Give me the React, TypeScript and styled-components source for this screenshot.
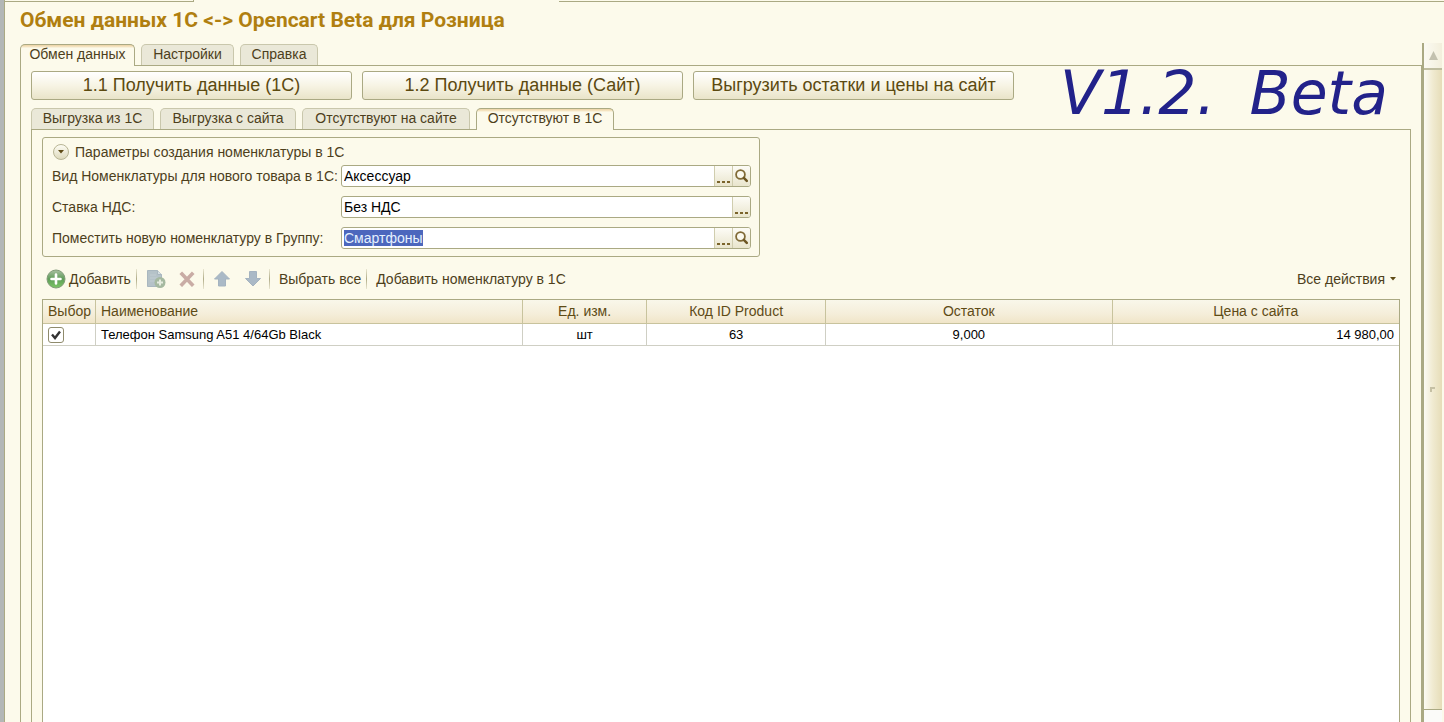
import React, { useEffect, useRef, useState } from "react";
import styled, { createGlobalStyle, css } from "styled-components";

const line = "#aaa983";
const cream = "#fcfaeb";
const brown = "#4d3f1c";

const GlobalStyle = createGlobalStyle`
  *, *::before, *::after { box-sizing: border-box; }
  body {
    margin: 0;
    background: ${cream};
    color: ${brown};
    font-family: "Liberation Sans", Arial, sans-serif;
    font-size: 14px;
    line-height: 16px;
  }
  button, input { font: inherit; color: inherit; }
`;

const Page = styled.div`
  display: flex;
  flex-direction: column;
  height: 100vh;
  overflow: hidden;
  border-left: 4px solid #b3b7b6;
  box-shadow: inset 1px 0 0 ${line};
`;

const TopStrip = styled.div`
  display: flex;
  justify-content: space-between;
  flex: none;
  height: 2px;
`;

const StripEdge = styled.div<{ $width: string; $end?: boolean }>`
  width: ${(p) => p.$width};
  border-bottom: 1px solid ${line};
  ${(p) => p.$end && "border-right: 1px solid #aaa983;"}
`;

const Title = styled.h1`
  margin: 0;
  padding: 6px 16px 0;
  height: 42px;
  flex: none;
  color: #b07f10;
  font-size: 21px;
  line-height: 24px;
  font-family: Roboto, "Liberation Sans", sans-serif;
  font-weight: 700;
`;

const Body = styled.div`
  display: flex;
  flex: 1;
  min-height: 0;
  padding-left: 16px;
`;

const TabbedArea = styled.div`
  display: flex;
  flex-direction: column;
  flex: 1;
  min-width: 0;
  min-height: 0;
`;

const TabList = styled.div`
  display: flex;
  flex: none;
  gap: 6px;
`;

const Tab = styled.button<{ $width: number; $active?: boolean }>`
  width: ${(p) => p.$width}px;
  height: 21px;
  padding: 0 0 2px;
  border: 1px solid #c9c7ac;
  border-bottom: 0;
  border-radius: 5px 5px 0 0;
  background: #eae8d8;
  line-height: 18px;
  white-space: nowrap;
  ${(p) =>
    p.$active &&
    css`
      position: relative;
      height: 22px;
      margin-bottom: -1px;
      padding-bottom: 3px;
      border-color: ${line};
      background: linear-gradient(#ecd3a4, #f6e8c8 2px, ${cream} 3px);
    `}
`;

const TabPanel = styled.div<{ $outer?: boolean }>`
  display: flex;
  flex-direction: column;
  flex: 1;
  min-height: 0;
  padding: ${(p) => (p.$outer ? "5px 10px 0" : "7px 10px 0")};
  border: 1px solid ${line};
  border-bottom: 0;
`;

const CommandRow = styled.div`
  display: flex;
  flex: none;
  gap: 10px;
  height: 37px;
`;

const CommandButton = styled.button`
  flex: none;
  width: 321px;
  height: 29px;
  padding: 0 0 1px;
  border: 1px solid ${line};
  border-radius: 3px;
  background: linear-gradient(#ffffff, #f7f4e4 50%, #e9e4c9);
  color: #5c4a10;
  font-size: 18px;
  white-space: nowrap;
`;

const Version = styled.div`
  display: flex;
  gap: 34px;
  margin-left: 36px;
  height: 44px;
  color: #22228a;
  font-family: "Segoe Print", "DejaVu Sans", cursive;
  font-size: 60px;
  font-style: italic;
  line-height: 44px;
  white-space: nowrap;
`;

const Params = styled.section`
  flex: none;
  width: 718px;
  height: 120px;
  padding: 6px 8px;
  border: 1px solid ${line};
  border-radius: 3px;
`;

const ParamsHeading = styled.div`
  display: flex;
  align-items: center;
  gap: 6px;
  height: 16px;
  margin-bottom: 5px;
  padding-left: 2px;
`;

const RoundButton = styled.button`
  display: grid;
  place-items: center;
  width: 16px;
  height: 16px;
  padding: 0;
  border: 1px solid #b8b594;
  border-radius: 50%;
  background: linear-gradient(#fdfcf3, #dedabd);
`;

const FieldRow = styled.div`
  display: flex;
  align-items: center;
  height: 22px;
  margin-bottom: 9px;
  label { flex: none; width: 290px; padding-left: 1px; white-space: nowrap; }
`;

const FieldBox = styled.div`
  display: flex;
  flex: 1;
  height: 22px;
  border: 1px solid ${line};
  border-radius: 3px;
  background: #fff;
  overflow: hidden;
`;

const FieldInput = styled.input`
  flex: 1;
  min-width: 0;
  padding: 0 2px;
  border: 0;
  outline: 0;
  background: transparent;
  color: #000;
  &::selection { background: #4c67bd; color: #e4f0ff; }
`;

const FieldButton = styled.button`
  display: grid;
  place-items: center;
  width: 18px;
  padding: 0;
  border: 0;
  border-left: 1px solid #d0cdae;
  background: linear-gradient(#fdfcf6, #e9e5cd);
`;

const Toolbar = styled.div`
  display: flex;
  align-items: center;
  flex: none;
  height: 26px;
  margin: 9px 0 7px;
  padding: 0 4px;
`;

const ToolButton = styled.button<{ $icon?: boolean; $gap?: number }>`
  display: flex;
  align-items: center;
  justify-content: center;
  gap: ${(p) => p.$gap ?? 3}px;
  height: 24px;
  ${(p) => p.$icon && "width: 31px;"}
  padding: 0;
  border: 0;
  background: transparent;
  white-space: nowrap;
`;

const Divider = styled.span<{ $before?: number; $after?: number }>`
  width: 1px;
  height: 20px;
  margin: 0 ${(p) => p.$after ?? 4}px 0 ${(p) => p.$before ?? 4}px;
  background: linear-gradient(#e9e6d0, #b0ac88, #e9e6d0);
`;

const Spacer = styled.span`
  flex: 1;
`;

const TableFrame = styled.div`
  flex: 1;
  min-height: 0;
  border: 1px solid ${line};
  border-bottom: 0;
  background: #fff;
`;

const DataTable = styled.table`
  width: 100%;
  border-collapse: separate;
  border-spacing: 0;
  table-layout: fixed;
`;

const HeadCell = styled.th<{ $width?: string; $left?: boolean }>`
  width: ${(p) => p.$width ?? "auto"};
  height: 24px;
  padding: 0 5px 1px;
  border-right: 1px solid #c8c39d;
  border-bottom: 1px solid #c8c39d;
  background: linear-gradient(#f9f7ea, #f5eeda 60%, #f0e5c8);
  color: #5e4b16;
  font-weight: 400;
  text-align: ${(p) => (p.$left ? "left" : "center")};
  white-space: nowrap;
  &:last-child { border-right: 0; }
`;

const Cell = styled.td<{ $align?: string }>`
  height: 22px;
  padding: 1px 5px 0;
  border-right: 1px solid #cfcfc4;
  border-bottom: 1px solid #cfcfc4;
  color: #000;
  font-size: 13px;
  text-align: ${(p) => p.$align ?? "center"};
  white-space: nowrap;
  &:last-child { border-right: 0; }
`;

const CheckBox = styled.input`
  appearance: none;
  width: 16px;
  height: 16px;
  margin: 0;
  border: 1px solid #8f8b6c;
  border-radius: 3px;
  background: #fff;
  &:not(:checked) + svg { visibility: hidden; }
`;

const CheckWrap = styled.label`
  display: grid;
  width: 16px;
  height: 16px;
  & > * { grid-area: 1 / 1; }
  svg { pointer-events: none; z-index: 1; }
`;

const ScrollColumn = styled.div`
  display: flex;
  flex-direction: column;
  flex: none;
  width: 22px;
  margin-top: -1px;
  padding-right: 2px;
  border-left: 2px solid ${line};
`;

const ScrollUp = styled.button`
  display: grid;
  place-items: center;
  flex: none;
  height: 27px;
  padding: 0;
  border: 0;
  border-bottom: 2px solid #bfbd9f;
  background: linear-gradient(90deg, #fbfaf2, #f3efdc);
`;

const ScrollThumb = styled.div`
  display: grid;
  place-items: center;
  flex: 1;
  border-bottom: 1px solid ${line};
  background: linear-gradient(90deg, #fcfbf2, #f0ead0 50%, #e6ddb8);
`;

const ScrollEnd = styled.div`
  flex: none;
  height: 12px;
  background: #fbfbf9;
`;

const DotsIcon = () => (
  <svg width="13" height="20" viewBox="0 0 13 20" aria-hidden="true">
    <path d="M0 15h3v2h-3zM5 15h3v2h-3zM10 15h3v2h-3z" fill="#7b642b" />
  </svg>
);

const SearchIcon = () => (
  <svg width="15" height="16" viewBox="0 0 15 16" aria-hidden="true">
    <circle cx="6.5" cy="6.5" r="4.4" fill="#fbf9ee" stroke="#806a36" strokeWidth="1.8" />
    <path d="M9.8 9.8l3 3" stroke="#6e5724" strokeWidth="2.6" strokeLinecap="round" />
  </svg>
);

const AddIcon = () => (
  <svg width="20" height="20" viewBox="0 0 20 20" aria-hidden="true">
    <defs>
      <linearGradient id="addFill" x1="0" y1="0" x2="0" y2="1">
        <stop offset="0" stopColor="#a9bfa3" />
        <stop offset="0.5" stopColor="#5f9d59" />
        <stop offset="1" stopColor="#7cc765" />
      </linearGradient>
    </defs>
    <circle cx="10" cy="10" r="9" fill="url(#addFill)" stroke="#809b78" />
    <path d="M10 5.5v9M5.5 10h9" stroke="#fff" strokeWidth="2.6" strokeLinecap="round" />
  </svg>
);

const CopyIcon = () => (
  <svg width="20" height="20" viewBox="0 0 20 20" aria-hidden="true">
    <path d="M1.5 1.5h10l4 4v12h-14z" fill="#b5c2c8" stroke="#a9b7bf" />
    <path d="M11.5 1.5v4h4" fill="#d8e0e2" stroke="#a9b7bf" />
    <path d="M4 6h6M4 9h8M4 12h5" stroke="#c1ccd1" />
    <circle cx="14" cy="13.5" r="5.5" fill="#a5b9a0" />
    <path d="M14 10.5v6M11 13.5h6" stroke="#e6ece0" strokeWidth="2" />
  </svg>
);

const DeleteIcon = () => (
  <svg width="16" height="16" viewBox="0 0 16 16" aria-hidden="true">
    <path d="M3 3l10 10.5M13 3l-10 10.5" stroke="#c9aca5" strokeWidth="3.6" strokeLinecap="square" />
  </svg>
);

const ArrowIcon = ({ down }: { down?: boolean }) => (
  <svg width="18" height="18" viewBox="0 0 18 18" aria-hidden="true">
    <path
      d={down ? "M5.5 1.5h7v7h4l-7.5 7.5l-7.5-7.5h4z" : "M9 1.5l7.5 7.5h-4v7h-7v-7h-4z"}
      fill="#aab9c6"
      stroke="#a4b3c0"
      strokeLinejoin="round"
    />
  </svg>
);

const Caret = () => (
  <svg width="6" height="4" viewBox="0 0 6 4" aria-hidden="true">
    <path d="M0 0h6l-3 3.5z" fill="#5e4b16" />
  </svg>
);

const mainTabs = [
  { name: "Обмен данных", width: 115 },
  { name: "Настройки", width: 93 },
  { name: "Справка", width: 78 },
];
const innerTabs = [
  { name: "Выгрузка из 1С", width: 123 },
  { name: "Выгрузка с сайта", width: 136 },
  { name: "Отсутствуют на сайте", width: 168 },
  { name: "Отсутствуют в 1С", width: 138 },
];
const commands = ["1.1 Получить данные (1С)", "1.2 Получить данные (Сайт)", "Выгрузить остатки и цены на сайт"];

interface TabsProps {
  items: { name: string; width: number }[];
  current: number;
  onPick: (index: number) => void;
}

function Tabs({ items, current, onPick }: TabsProps) {
  return (
    <TabList role="tablist">
      {items.map((t, i) => (
        <Tab key={t.name} role="tab" aria-selected={i === current} $width={t.width} $active={i === current} onClick={() => onPick(i)}>
          {t.name}
        </Tab>
      ))}
    </TabList>
  );
}

interface FieldProps {
  id: string;
  label: string;
  value: string;
  search?: boolean;
  selected?: boolean;
}

function Field({ id, label, value, search, selected }: FieldProps) {
  const ref = useRef<HTMLInputElement>(null);
  useEffect(() => {
    if (selected) {
      ref.current?.focus();
      ref.current?.select();
    }
  }, [selected]);
  return (
    <FieldRow>
      <label htmlFor={id}>{label}</label>
      <FieldBox>
        <FieldInput id={id} ref={ref} defaultValue={value} />
        <FieldButton type="button" aria-label="Выбрать"><DotsIcon /></FieldButton>
        {search && <FieldButton type="button" aria-label="Открыть"><SearchIcon /></FieldButton>}
      </FieldBox>
    </FieldRow>
  );
}

export default function App() {
  const [mainTab, setMainTab] = useState(0);
  const [innerTab, setInnerTab] = useState(3);
  return (
    <>
      <GlobalStyle />
      <Page>
        <TopStrip>
          <StripEdge $width="190px" $end />
          <StripEdge $width="calc(100% - 555px)" />
        </TopStrip>
        <Title>Обмен данных 1С &lt;-&gt; Opencart Beta для Розница</Title>
        <Body>
          <TabbedArea>
            <Tabs items={mainTabs} current={mainTab} onPick={setMainTab} />
            <TabPanel $outer role="tabpanel">
              <CommandRow>
                {commands.map((c) => <CommandButton key={c}>{c}</CommandButton>)}
                <Version><span>V1.2.</span><span>Beta</span></Version>
              </CommandRow>
              <Tabs items={innerTabs} current={innerTab} onPick={setInnerTab} />
              <TabPanel role="tabpanel">
                <Params>
                  <ParamsHeading>
                    <RoundButton aria-label="Свернуть"><Caret /></RoundButton>
                    <span>Параметры создания номенклатуры в 1С</span>
                  </ParamsHeading>
                  <Field id="kind" label="Вид Номенклатуры для нового товара в 1С:" value="Аксессуар" search />
                  <Field id="vat" label="Ставка НДС:" value="Без НДС" />
                  <Field id="group" label="Поместить новую номенклатуру в Группу:" value="Смартфоны" search selected />
                </Params>
                <Toolbar>
                  <ToolButton><AddIcon />Добавить</ToolButton>
                  <Divider $before={5} />
                  <ToolButton $icon aria-label="Скопировать"><CopyIcon /></ToolButton>
                  <ToolButton $icon aria-label="Удалить"><DeleteIcon /></ToolButton>
                  <Divider $before={0} $after={3} />
                  <ToolButton $icon aria-label="Вверх"><ArrowIcon /></ToolButton>
                  <ToolButton $icon aria-label="Вниз"><ArrowIcon down /></ToolButton>
                  <Divider $before={0} $after={9} />
                  <ToolButton>Выбрать все</ToolButton>
                  <Divider $before={5} $after={9} />
                  <ToolButton>Добавить номенклатуру в 1С</ToolButton>
                  <Spacer />
                  <ToolButton $gap={5}>Все действия<Caret /></ToolButton>
                </Toolbar>
                <TableFrame>
                  <DataTable>
                    <thead>
                      <tr>
                        <HeadCell $width="53px" $left>Выбор</HeadCell>
                        <HeadCell $width="31.5%" $left>Наименование</HeadCell>
                        <HeadCell $width="124px">Ед. изм.</HeadCell>
                        <HeadCell $width="179px">Код ID Product</HeadCell>
                        <HeadCell>Остаток</HeadCell>
                        <HeadCell>Цена с сайта</HeadCell>
                      </tr>
                    </thead>
                    <tbody>
                      <tr>
                        <Cell $align="left">
                          <CheckWrap>
                            <CheckBox type="checkbox" defaultChecked aria-label="Выбор" />
                            <svg width="16" height="16" viewBox="0 0 16 16" aria-hidden="true">
                              <path d="M4 7.5l3 3.5l5-6.5" fill="none" stroke="#333" strokeWidth="2.4" />
                            </svg>
                          </CheckWrap>
                        </Cell>
                        <Cell $align="left">Телефон Samsung A51 4/64Gb Black</Cell>
                        <Cell>шт</Cell>
                        <Cell>63</Cell>
                        <Cell>9,000</Cell>
                        <Cell $align="right">14 980,00</Cell>
                      </tr>
                    </tbody>
                  </DataTable>
                </TableFrame>
              </TabPanel>
            </TabPanel>
          </TabbedArea>
          <ScrollColumn>
            <ScrollUp aria-label="Прокрутить вверх">
              <svg width="9" height="9" viewBox="0 0 9 9" aria-hidden="true"><path d="M4.5 0l4.5 9h-9z" fill="#c3c1af" /></svg>
            </ScrollUp>
            <ScrollThumb>
              <svg width="6" height="6" viewBox="0 0 6 6" aria-hidden="true"><path d="M1 5v-4h4" fill="none" stroke="#c5c0a4" strokeWidth="2" /></svg>
            </ScrollThumb>
            <ScrollEnd />
          </ScrollColumn>
        </Body>
      </Page>
    </>
  );
}
